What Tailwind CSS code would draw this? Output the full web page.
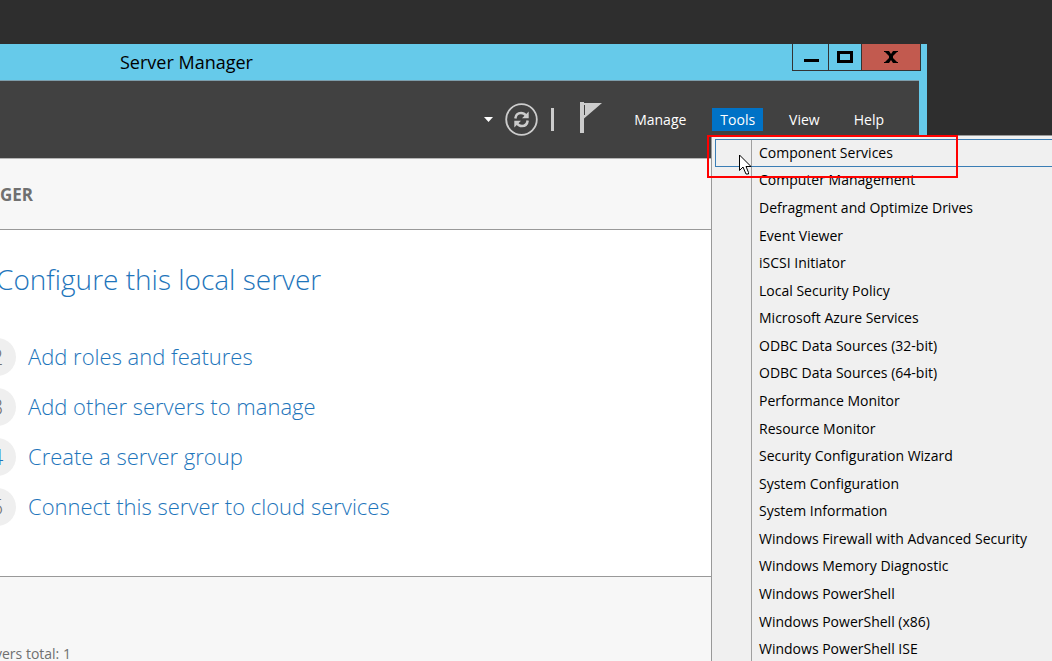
<!DOCTYPE html>
<html lang="en">
<head>
<meta charset="utf-8">
<title>Server Manager</title>
<script src="https://cdn.jsdelivr.net/npm/@tailwindcss/browser@4"></script>
</head>
<body class="relative h-screen overflow-hidden bg-[#2e2e2e] font-['Open_Sans','Noto_Sans',sans-serif] text-sm text-black">

<!-- Application window -->
<div class="absolute top-11 bottom-0 left-0 right-[125px] flex flex-col bg-[#66caea] pr-2">
  <div class="-mr-2 flex h-9 shrink-0 justify-between pr-1.5">
    <div class="pl-[120px] pt-1 text-lg leading-7">Server Manager</div>
    <div class="flex h-[27px] border-x border-b border-[#333]">
      <button aria-label="Minimize" class="flex w-[35px] items-center justify-center">
        <svg class="h-4 w-4" viewBox="0 0 16 16"><path d="M1 10h15v3H1z"/></svg>
      </button>
      <button aria-label="Maximize" class="flex w-[33px] items-center justify-center border-l border-[#333]">
        <svg class="h-4 w-4" viewBox="0 0 16 16"><path d="M1.500 3.500h13v9h-13z" fill="none" stroke="#000" stroke-width="3"/></svg>
      </button>
      <button aria-label="Close" class="flex w-[59px] items-center justify-center border-l border-[#333] bg-[#c25a4f]">
        <svg class="h-4 w-4" viewBox="0 0 16 16"><path d="M1 2h5l2 3 2-3h5v1h-1L10 7v2l4 4h1v1h-5l-2-3-2 3H1v-1h1l4-4V7L2 3H1z"/></svg>
      </button>
    </div>
  </div>

  <header class="flex h-[78px] shrink-0 items-center justify-end border-t border-[#7d9dab] bg-[#414141] pr-[27px] text-white">
    <button aria-label="History" class="mr-3 p-0">
      <svg class="h-[5px] w-[9px]" viewBox="0 0 9 5"><path d="M0 0h9L4.500 5z" fill="#fff"/></svg>
    </button>
    <button aria-label="Refresh">
      <svg class="h-[33px] w-[33px]" viewBox="0 0 33 33" fill="none" stroke="#ccc">
        <circle cx="16.500" cy="16.500" r="15.300" stroke-width="1.800"/>
        <path d="M10.300 15.500c.5-4 3-5.500 5.700-5.500 2.200 0 3.700.8 5 2.600" stroke-width="2.500"/>
        <path d="M22.700 17.500c-.5 4-3 5.500-5.700 5.500-2.200 0-3.700-.8-5-2.600" stroke-width="2.500"/>
        <path d="M23.700 8.500v6.700h-6.700z M9.300 24.500v-6.700H16z" fill="#ccc" stroke="none"/>
      </svg>
    </button>
    <span class="ml-[13px] h-[23px] w-[3px] bg-[#ccc]"></span>
    <button aria-label="Notifications" class="ml-[26px] mb-1">
      <svg class="h-[31px] w-[22px]" viewBox="0 0 22 31"><path d="M0 0h4v1h18L4 16.500V31H0z" fill="#ccc"/><path d="M4.500 3v10" stroke="#414141"/></svg>
    </button>
    <nav class="ml-6 flex gap-[18px]">
      <button class="h-[23px] px-2 pt-px">Manage</button>
      <button class="h-[23px] bg-[#0072c6] px-2 pt-px">Tools</button>
      <button class="h-[23px] px-2 pt-px">View</button>
      <button class="h-[23px] px-2 pt-px">Help</button>
    </nav>
  </header>

  <main class="flex grow flex-col bg-white">
    <div class="flex h-[72px] shrink-0 items-center border-t border-b border-t-[#b5b5b5] border-b-[#999] bg-[#f7f7f7] pt-0.5 text-[17px] font-bold text-[#707070]">
      <h1>GER</h1>
    </div>
    <section class="h-[346px] shrink-0 overflow-hidden pt-[27px] text-[#1e75bb]">
      <h2 class="-ml-1 text-[28px] leading-[44px] font-light">Configure this local server</h2>
      <ol class="mt-[37px] flex flex-col gap-3 text-[22px] font-light">
        <li class="flex h-[38px] items-center gap-3"><span class="-ml-[22px] flex h-[38px] w-[38px] items-center justify-center rounded-full bg-[#efefef] text-[#707070]">2</span><a href="#">Add roles and features</a></li>
        <li class="flex h-[38px] items-center gap-3"><span class="-ml-[22px] flex h-[38px] w-[38px] items-center justify-center rounded-full bg-[#efefef] text-[#707070]">3</span><a href="#">Add other servers to manage</a></li>
        <li class="flex h-[38px] items-center gap-3"><span class="-ml-[22px] flex h-[38px] w-[38px] items-center justify-center rounded-full bg-[#efefef] text-[#1e75bb]">4</span><a href="#">Create a server group</a></li>
        <li class="flex h-[38px] items-center gap-3"><span class="-ml-[22px] flex h-[38px] w-[38px] items-center justify-center rounded-full bg-[#efefef] text-[#707070]">5</span><a href="#">Connect this server to cloud services</a></li>
      </ol>
    </section>
    <section class="grow border-t border-[#999] bg-[#f7f7f7] pt-[67px] text-[#707070]">
      <p class="-ml-[5px]">vers total: 1</p>
    </section>
  </main>
</div>

<!-- Tools menu -->
<div class="absolute top-[135px] right-0 -bottom-0.5 left-[711px] flex border-t border-l border-[#999] bg-[#f0f0f0] pt-[3px] pl-[3px]">
  <ul class="flex grow flex-col bg-[linear-gradient(to_right,transparent_36px,#a0a0a0_36px,#a0a0a0_37px,transparent_37px)]">
    <li class="flex flex-1"><button class="flex w-full items-center border border-r-0 border-[#3a7db5] pl-[43px]">Component Services</button></li>
    <li class="flex flex-1"><button class="flex w-full items-center pl-11">Computer Management</button></li>
    <li class="flex flex-1"><button class="flex w-full items-center pl-11">Defragment and Optimize Drives</button></li>
    <li class="flex flex-1"><button class="flex w-full items-center pl-11">Event Viewer</button></li>
    <li class="flex flex-1"><button class="flex w-full items-center pl-11">iSCSI Initiator</button></li>
    <li class="flex flex-1"><button class="flex w-full items-center pl-11">Local Security Policy</button></li>
    <li class="flex flex-1"><button class="flex w-full items-center pl-11">Microsoft Azure Services</button></li>
    <li class="flex flex-1"><button class="flex w-full items-center pl-11">ODBC Data Sources (32-bit)</button></li>
    <li class="flex flex-1"><button class="flex w-full items-center pl-11">ODBC Data Sources (64-bit)</button></li>
    <li class="flex flex-1"><button class="flex w-full items-center pl-11">Performance Monitor</button></li>
    <li class="flex flex-1"><button class="flex w-full items-center pl-11">Resource Monitor</button></li>
    <li class="flex flex-1"><button class="flex w-full items-center pl-11">Security Configuration Wizard</button></li>
    <li class="flex flex-1"><button class="flex w-full items-center pl-11">System Configuration</button></li>
    <li class="flex flex-1"><button class="flex w-full items-center pl-11">System Information</button></li>
    <li class="flex flex-1"><button class="flex w-full items-center pl-11">Windows Firewall with Advanced Security</button></li>
    <li class="flex flex-1"><button class="flex w-full items-center pl-11">Windows Memory Diagnostic</button></li>
    <li class="flex flex-1"><button class="flex w-full items-center pl-11">Windows PowerShell</button></li>
    <li class="flex flex-1"><button class="flex w-full items-center pl-11">Windows PowerShell (x86)</button></li>
    <li class="flex flex-1"><button class="flex w-full items-center pl-11">Windows PowerShell ISE</button></li>
  </ul>
</div>

<!-- Highlight box and pointer -->
<div class="absolute top-[135px] left-[707px] h-[43px] w-[251px] border-2 border-[#f00]"></div>
<svg class="absolute top-[154px] left-[739px] h-[21px] w-[13px]" viewBox="0 0 13 21"><path d="M.5 1v15.500l3.500-3.500 3 7h2.500v-1.500L7 12.500h5z" fill="#fff" stroke="#000"/></svg>
</body>
</html>
